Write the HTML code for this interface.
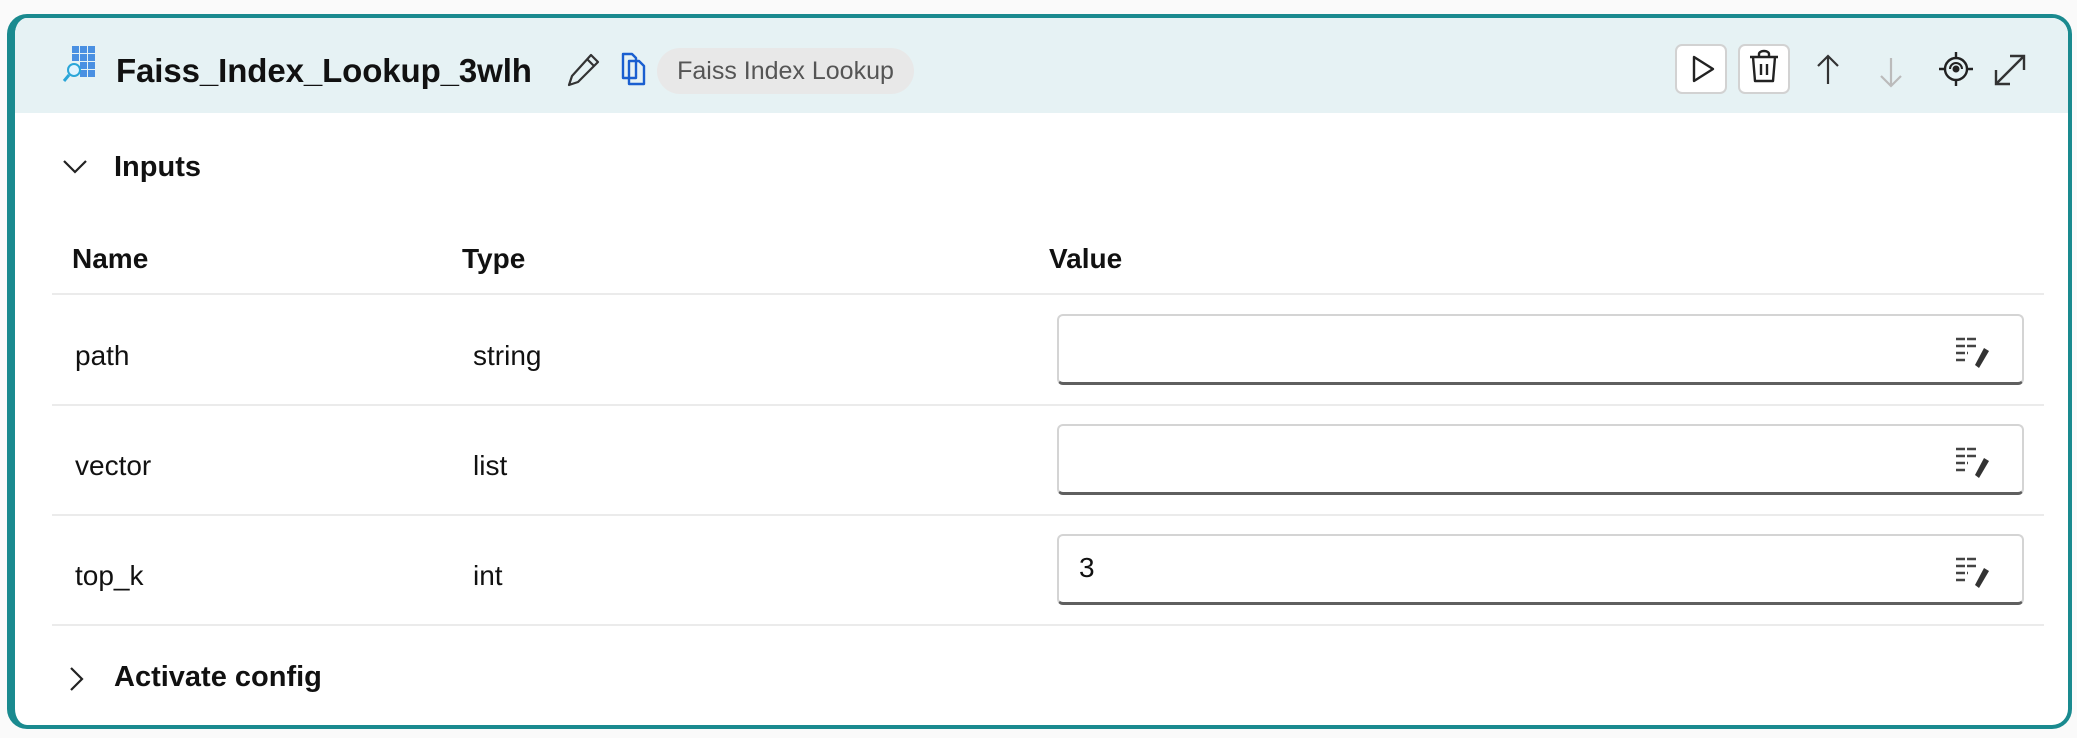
<!DOCTYPE html>
<html><head><meta charset="utf-8"><style>
*{box-sizing:border-box;margin:0;padding:0}
body{width:2077px;height:738px;background:#fafafa;font-family:"Liberation Sans",sans-serif;color:#111;position:relative;overflow:hidden}
.card{position:absolute;left:7px;top:14px;width:2065px;height:715px;border:4px solid #1a8a8f;border-left-width:8px;border-radius:20px;background:#fff;overflow:hidden}
.hdr{position:absolute;left:0;top:0;right:0;height:95px;background:#e6f2f4}
.in{position:absolute;left:-8px;top:0;width:2065px;height:715px}
.a{position:absolute;white-space:nowrap}
.title{font-weight:bold;font-size:33px;letter-spacing:-0.1px;left:109px;top:34px}
.pill{left:650px;top:30px;height:46px;width:257px;border-radius:23px;background:#e8e8e8;color:#555;font-size:25px;line-height:46px;text-align:center}
.btn{position:absolute;top:26px;width:52px;height:50px;border:2px solid #d2d2d2;border-radius:7px;background:#fff}
.sec{font-size:29px;font-weight:600}
.th{font-size:28px;font-weight:bold;top:225px}
.line{position:absolute;left:45px;width:1992px;height:2px;background:#ebebeb}
.td{font-size:28px}
.box{position:absolute;left:1050px;width:967px;height:71px;border:2px solid #d4d4d4;border-bottom:3px solid #5f5f5f;border-radius:6px;background:#fff}
.box svg{position:absolute;right:30px;top:20px}
</style></head><body>
<div class="card">
<div class="hdr"></div>
<div class="in">
<svg class="a" style="left:55px;top:26px" width="36" height="40" viewBox="0 0 36 40">
<g fill="#4a90e2"><rect x="10" y="2" width="7" height="7"/><rect x="18" y="2" width="7" height="7"/><rect x="26" y="2" width="7" height="7"/><rect x="10" y="10" width="7" height="7"/><rect x="18" y="10" width="7" height="7"/><rect x="26" y="10" width="7" height="7"/><rect x="18" y="18" width="7" height="7"/><rect x="26" y="18" width="7" height="7"/><rect x="18" y="26" width="7" height="7"/><rect x="26" y="26" width="7" height="7"/></g>
<circle cx="12" cy="26" r="6" fill="#e0f4ff" stroke="#2aa6d8" stroke-width="2"/><line x1="7" y1="31" x2="2" y2="37" stroke="#2aa6d8" stroke-width="3"/></svg>
<div class="a title">Faiss_Index_Lookup_3wlh</div>
<svg class="a" style="left:560px;top:34px" width="34" height="36" viewBox="0 0 34 36"><path d="M24 3l7 7L11 30l-9 3 3-9z M20 7l7 7" fill="none" stroke="#333" stroke-width="2.2" stroke-linejoin="round"/></svg>
<svg class="a" style="left:613px;top:33px" width="28" height="36" viewBox="0 0 28 36"><path d="M3 3h9l4 4v20H3z M9 10h10l5 5v18H9z" fill="none" stroke="#1a5fd0" stroke-width="2.4" stroke-linejoin="round"/></svg>
<div class="a pill">Faiss Index Lookup</div>
<div class="btn" style="left:1668px"><svg width="48" height="46" viewBox="0 0 48 46"><path d="M17 11v24l19-12z" fill="none" stroke="#222" stroke-width="2.4" stroke-linejoin="round"/></svg></div>
<div class="btn" style="left:1731px"><svg width="48" height="46" viewBox="0 0 48 46"><path d="M10 11h28 M19 11v-3a5 3 0 0 1 10 0v3 M13 11l2 24h18l2-24 M21 18v11 M27 18v11" fill="none" stroke="#222" stroke-width="2.4" stroke-linejoin="round"/></svg></div>
<svg class="a" style="left:1807px;top:34px" width="28" height="36" viewBox="0 0 28 36"><path d="M14 32V4 M4 14L14 4l10 10" fill="none" stroke="#333" stroke-width="2.2"/></svg>
<svg class="a" style="left:1870px;top:36px" width="28" height="36" viewBox="0 0 28 36"><path d="M14 4v28 M4 22l10 10 10-10" fill="none" stroke="#bbb" stroke-width="2.2"/></svg>
<svg class="a" style="left:1930px;top:32px" width="38" height="38" viewBox="0 0 38 38"><circle cx="19" cy="19" r="11" fill="none" stroke="#222" stroke-width="2.4"/><path d="M19 2v6 M19 30v6 M2 19h6 M30 19h6" stroke="#222" stroke-width="2.4"/><circle cx="19" cy="19" r="3.5" fill="#222"/><path d="M13 19a6 6 0 0 1 12 0" fill="none" stroke="#222" stroke-width="2"/></svg>
<svg class="a" style="left:1985px;top:34px" width="36" height="36" viewBox="0 0 36 36"><path d="M4 32L32 4 M18 4h14v14 M4 18v14h14" fill="none" stroke="#333" stroke-width="2.4"/></svg>

<svg class="a" style="left:55px;top:140px" width="26" height="18" viewBox="0 0 26 18"><path d="M2 3l11 11L24 3" fill="none" stroke="#222" stroke-width="2.2"/></svg>
<div class="a sec" style="left:107px;top:133px">Inputs</div>
<div class="a th" style="left:65px">Name</div>
<div class="a th" style="left:455px">Type</div>
<div class="a th" style="left:1042px">Value</div>
<div class="line" style="top:275px"></div>
<div class="line" style="top:386px"></div>
<div class="line" style="top:496px"></div>
<div class="line" style="top:606px"></div>
<div class="a td" style="left:68px;top:322px">path</div>
<div class="a td" style="left:466px;top:322px">string</div>
<div class="a td" style="left:68px;top:432px">vector</div>
<div class="a td" style="left:466px;top:432px">list</div>
<div class="a td" style="left:68px;top:542px">top_k</div>
<div class="a td" style="left:466px;top:542px">int</div>
<div class="box" style="top:296px"><svg width="38" height="34" viewBox="0 0 38 34"><path d="M2 3h20 M2 10h20 M2 17h12 M2 24h10" stroke="#444" stroke-width="2.4" stroke-dasharray="9 2"/><path d="M30 12l5 3-10 17-4-3z" fill="#333"/></svg></div>
<div class="box" style="top:406px"><svg width="38" height="34" viewBox="0 0 38 34"><path d="M2 3h20 M2 10h20 M2 17h12 M2 24h10" stroke="#444" stroke-width="2.4" stroke-dasharray="9 2"/><path d="M30 12l5 3-10 17-4-3z" fill="#333"/></svg></div>
<div class="box" style="top:516px"><span class="a td" style="left:20px;top:16px">3</span><svg width="38" height="34" viewBox="0 0 38 34"><path d="M2 3h20 M2 10h20 M2 17h12 M2 24h10" stroke="#444" stroke-width="2.4" stroke-dasharray="9 2"/><path d="M30 12l5 3-10 17-4-3z" fill="#333"/></svg></div>
<svg class="a" style="left:60px;top:647px" width="18" height="28" viewBox="0 0 18 28"><path d="M4 3l11 11L4 25" fill="none" stroke="#222" stroke-width="2.2"/></svg>
<div class="a sec" style="left:107px;top:643px">Activate config</div>
</div>
</div>
</body></html>
